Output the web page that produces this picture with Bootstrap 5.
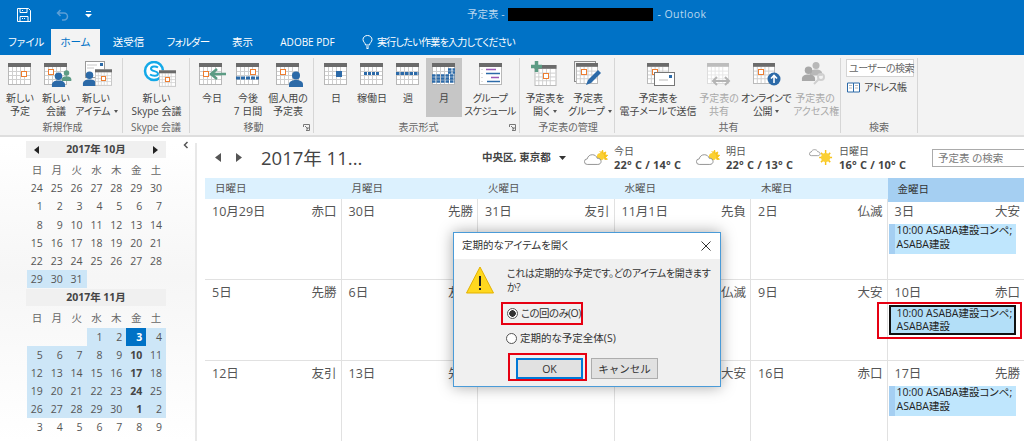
<!DOCTYPE html>
<html lang="ja">
<head>
  <meta charset="UTF-8">
  <meta name="viewport" content="width=device-width, initial-scale=1.0">
  <title>予定表 - Outlook</title>
  <link href="https://cdn.jsdelivr.net/npm/bootstrap@5.3.0/dist/css/bootstrap.min.css" rel="stylesheet">
  <style>
    html, body { height: 441px; overflow: hidden; }
    body {
      position: relative;
      font-family: "Open Sans", "Noto Sans CJK JP", sans-serif;
      font-feature-settings: "palt";
      font-size: 10px;
      color: #555;
      background: #fff;
    }
    .tight { letter-spacing: -.6px; }
    /* title bar and tabs */
    .title-bar { height: 29px; background: #0072c6; color: #b9d7ef; font-size: 10.5px; }
    .quick-bar { width: 467px; }
    .quick-bar svg { display: block; }
    .title-mask { width: 145px; height: 13px; background: #000; margin: 0 5px 0 3px; }
    .title-app { letter-spacing: .4px; }
    .tab-bar { height: 26px; background: #0072c6; color: #fff; font-size: 10.5px; }
    .tab-item { line-height: 26px; text-align: center; }
    .tab-file { width: 51px; padding-left: 8px; text-align: left; }
    .tab-home { width: 49px; background: #f3f3f3; color: #0072c6; }
    .tab-send { width: 57px; }
    .tab-folder { width: 62px; letter-spacing: -.8px; }
    .tab-view { width: 47px; }
    .tab-pdf { width: 83px; font-size: 10px; }
    .tab-tell { margin-left: 13px; gap: 4px; font-size: 10px; letter-spacing: -.7px; }
    /* ribbon */
    .ribbon { height: 82px; background: #f3f3f3; border-bottom: 2px solid #dedede; }
    .rb-group { position: relative; height: 75px; margin-top: 3px; border-right: 1px solid #d6d6d6; flex-shrink: 0; }
    .rb-btns { flex: 1; }
    .rb-label { height: 16px; padding-top: 4px; line-height: 12px; text-align: center; color: #666; }
    .rb-launch { position: absolute; right: 3px; bottom: 2px; display: block; }
    .rb-btn { height: 59px; padding-top: 3px; line-height: 13px; color: #444; text-align: center; flex-shrink: 0; white-space: nowrap; }
    .rb-btn svg { display: block; margin: 0 auto 3px; }
    .rb-on { background: #c6c6c6; }
    .rb-off { color: #a9a9a9; }
    .dd::after { content: ""; display: inline-block; margin-left: 3px; vertical-align: 2px; border: 2px solid transparent; border-top: 3px solid #555; border-bottom: 0; }
    .g1 { width: 123px; padding-left: 3px; } .g2 { width: 67px; } .g3 { width: 124px; padding-left: 4px; }
    .g4 { width: 206px; padding-left: 4px; } .g5 { width: 95px; padding-left: 2px; } .g6 { width: 226px; padding-left: 2px; } .g7 { width: 77px; }
    .w34 { width: 34px; } .w36 { width: 36px; } .w38 { width: 38px; } .w40 { width: 40px; } .w42 { width: 42px; } .w44 { width: 44px; }
    .w46 { width: 46px; } .w54 { width: 54px; } .w56 { width: 56px; } .w67 { width: 67px; } .w82 { width: 82px; }
    .people-find { margin: 1px 3px 0 5px; height: 18px; line-height: 16px; border: 1px solid #d4d4d4; background: #fff; padding-left: 2px; color: #666; white-space: nowrap; letter-spacing: -.5px; }
    .addr-book { margin: 4px 0 0 6px; gap: 3px; color: #444; line-height: 13px; letter-spacing: -.5px; }
    /* left pane */
    .app-body { height: 304px; }
    .side { width: 197px; flex-shrink: 0; margin-top: 6px; padding: 0 0 0 26px; border-right: 2px solid #e8e8e8; position: relative; background: linear-gradient(#fff, #f6f6f6 45%, #fff); }
    .side-hide { position: absolute; top: -2px; left: 183px; display: block; }
    .mini-cal { width: 140px; }
    .mini-head { height: 17px; margin-top: -2px; background: #f0f0f0; font-size: 10.5px; font-weight: 700; color: #444; }
    .mini-oct { margin-top: 0; }
    .mini-nov { margin-top: 3px; }
    .mini-grid { display: grid; grid-template-columns: repeat(7, 1fr); grid-auto-rows: 18.2px; width: 139px; margin: 3px 0 0 1px; font-size: 10.5px; line-height: 18px; }
    .mini-wd { text-align: center; color: #666; }
    .mini-day { text-align: right; padding-right: 4px; }
    .mini-in { background: #cde6f7; }
    .mini-sel { background: #0072c6; color: #fff; font-weight: 700; }
    .mini-bold { font-weight: 700; color: #444; }
    /* calendar */
    .main-pane { flex: 1; min-width: 0; padding-left: 8px; }
    .cal-top { height: 41px; }
    .nav-arrows { width: 56px; padding-left: 10px; gap: 15px; }
    .cal-title { width: 221px; font-size: 18.5px; color: #444; line-height: 24px; }
    .cal-place { width: 102px; font-size: 10.5px; font-weight: 700; color: #444; white-space: nowrap; }
    .wx-item { gap: 6px; line-height: 13px; }
    .wx-temp { font-size: 11px; font-weight: 700; color: #444; letter-spacing: .2px; white-space: nowrap; }
    .wx-1 { width: 112px; } .wx-2 { width: 113px; } .wx-3 { width: 123px; }
    .cal-search { flex: 1; height: 18px; margin-top: 1px; border: 1px solid #ababab; border-right: 0; color: #777; line-height: 16px; padding-left: 5px; font-size: 10.5px; white-space: nowrap; }
    .month-grid { display: grid; grid-template-columns: repeat(6, 1fr); grid-template-rows: 21px 81px 81px 81px; }
    .day-head { background: #dcf1fe; font-size: 10.5px; line-height: 21px; padding-left: 10px; color: #555; }
    .day-head-on { background: #a5cff2; height: 24px; line-height: 22px; position: relative; z-index: 1; color: #333; }
    .day-cell { padding-top: 4px; border-right: 1px solid #e1e1e1; border-bottom: 1px solid #e1e1e1; position: relative; }
    .day-cell:nth-child(6n) { border-right: 0; }
    .day-line { height: 18px; padding: 0 4px 0 7px; font-size: 12.5px; line-height: 18px; white-space: nowrap; }
    .appt { position: relative; width: 127px; height: 30px; margin: 3px 0 0 1px; border-left: 6px solid #a5cff2; padding-left: 2px; background: #bfe6fd; color: #222; font-size: 10.5px; line-height: 13.5px; white-space: nowrap; }
    .appt-sel { border: 2px solid #111; padding-left: 6px; line-height: 12.5px; background: #b3dff8; }
    .appt-sel::after { content: ""; position: absolute; top: -5px; right: -8px; bottom: -6px; left: -14px; border: 2px solid #e60012; }
    /* dialog */
    .dlg { position: absolute; left: 453px; top: 232px; width: 268px; height: 155px; background: #f0f0f0; border: 1px solid #4a9bd8; box-shadow: 0 0 14px rgba(0, 0, 0, .35); z-index: 5; font-size: 10.5px; color: #333; }
    .dlg-title { height: 26px; background: #fff; padding: 0 9px 0 8px; }
    .dlg-msg { padding: 7px 8px 0 12px; gap: 13px; line-height: 14px; height: 42px; font-size: 10px; letter-spacing: -.35px; white-space: nowrap; }
    .dlg-radio { margin: 0; padding: 0; min-height: 0; gap: 3px; line-height: 15px; }
    .dlg-radio .form-check-input { float: none; margin: 0; width: 11px; height: 11px; border: 1px solid #555; background: #fff; flex-shrink: 0; }
    .dlg-radio .form-check-input:checked { background-image: radial-gradient(circle, #333 0 3px, transparent 3.5px); background-color: #fff; border-color: #555; }
    .dlg-radio .form-check-label { font-size: 10.5px; white-space: nowrap; }
    .radio-mark { margin: 1px 0 0 47px; width: 82px; height: 23px; padding-left: 4px; border: 2px solid #e60012; }
    .radio-mark .form-check-label { letter-spacing: -.6px; }
    .radio-plain { margin: 3px 0 0 52px; height: 20px; }
    .dlg-btns { margin: 5px 0 0 54px; gap: 4px; }
    .ok-mark { padding: 3px 2px 1px 6px; border: 2px solid #e60012; height: 28px; }
    .dlg-btn { width: 67px; height: 21px; padding: 0; border-radius: 0; background: #e1e1e1; border: 1px solid #adadad; color: #333; font-size: 10.5px; line-height: 18px; }
    .dlg-ok { border: 2px solid #0078d7; }
    .btn-cancel { margin-top: 5px; }
  </style>
</head>
<body>
  <!-- shared icon parts -->
  <svg width="0" height="0" class="d-block">
    <defs>
      <symbol id="cal" viewBox="0 0 23 22">
        <rect x=".5" y=".5" width="22" height="21" fill="#fff" stroke="#b8b8b8"/>
        <path d="M4.500 4v17M8.500 4v17M12.500 4v17M16.500 4v17M1 8.500h21M1 12.500h21M1 16.500h21" stroke="#cfcfcf" fill="none"/>
        <rect width="23" height="4" fill="#6b6b6b"/>
      </symbol>
      <symbol id="calp" viewBox="0 0 23 22">
        <rect x=".5" y=".5" width="22" height="21" fill="#fff" stroke="#dcdcdc"/>
        <path d="M4.500 4v17M8.500 4v17M12.500 4v17M16.500 4v17M1 8.500h21M1 12.500h21M1 16.500h21" stroke="#e6e6e6" fill="none"/>
        <rect width="23" height="4" fill="#bdbdbd"/>
      </symbol>
      <symbol id="man" viewBox="0 0 16 16">
        <circle cx="8" cy="4.500" r="4"/>
        <path d="M1 16v-2.500c0-3 3-4.500 7-4.500s7 1.500 7 4.500V16z"/>
      </symbol>
      <symbol id="wx" viewBox="0 0 26 18">
        <path d="M17 2l1.500 2 1.700-3 .5 3.400 3-1.400-1 3.300 3 .3-2.300 2.300 2 2-3 .3" fill="#f7c31b" stroke="#f7c31b"/>
        <circle cx="18" cy="8" r="4" fill="#fbd033"/>
        <path d="M3.500 16.500a3 3 0 0 1 0-6c.6-3 3-4.500 5.500-4.500 2.600 0 4.600 1.400 5.300 3.800 2.500-.2 4.200 1.300 4.200 3.400s-1.600 3.300-3.500 3.300z" fill="#fff" stroke="#8c8c8c"/>
      </symbol>
      <symbol id="wxsun" viewBox="0 0 26 18">
        <path d="M18 1v16M11 9h14M13 4l10 10M23 4L13 14" stroke="#f7c31b" stroke-width="1.600"/>
        <circle cx="18" cy="9" r="5" fill="#fbd033"/>
        <path d="M2.500 7a2 2 0 0 1 0-4c.5-1.700 2-2.500 3.500-2.500 1.700 0 3 .9 3.500 2.300 1.500 0 2.500.9 2.500 2.100S11 7 9.500 7z" fill="#fff" stroke="#9a9a9a"/>
      </symbol>
    </defs>
  </svg>

  <div class="title-bar d-flex align-items-center">
    <div class="quick-bar d-flex align-items-center">
      <svg class="ms-3" width="16" height="16" viewBox="0 0 16 16" fill="none" stroke="#fff"><path d="M1.500 1.500h11l2 2v11h-13zM4 1.500v4h7v-4M4 14.500v-5h8v5"/><path d="M6 11.500h4M6 3.500h2" stroke-dasharray="1 1"/></svg>
      <svg class="ms-4" width="13" height="12" viewBox="0 0 13 12" fill="none" stroke="#5c9fd6" stroke-width="1.500"><path d="M4.500 1L1.500 4l3 3M1.500 4H8a3.500 3.500 0 0 1 0 7H6"/></svg>
      <svg class="ms-3" width="7" height="7" viewBox="0 0 7 7" fill="#fff"><path d="M1 0h5v1H1zM0 3h7L3.500 6.500z"/></svg>
    </div>
    <span>予定表 -</span>
    <span class="title-mask"></span>
    <span class="title-app">- Outlook</span>
  </div>

  <div class="tab-bar d-flex">
    <div class="tab-item tab-file">ファイル</div>
    <div class="tab-item tab-home">ホーム</div>
    <div class="tab-item tab-send">送受信</div>
    <div class="tab-item tab-folder">フォルダー</div>
    <div class="tab-item tab-view">表示</div>
    <div class="tab-item tab-pdf">ADOBE PDF</div>
    <div class="tab-item tab-tell d-flex align-items-center">
      <svg width="11" height="14" viewBox="0 0 11 14" fill="none" stroke="#fff"><path d="M3.500 10C3.500 8 1 7 1 4.500a4.500 4 0 0 1 9 0C10 7 7.500 8 7.500 10zM4 12h3M4.500 13.500h2"/></svg>
      <span>実行したい作業を入力してください</span>
    </div>
  </div>

  <div class="ribbon d-flex">
    <div class="rb-group g1 d-flex flex-column">
      <div class="rb-btns d-flex">
        <div class="rb-btn w34">
          <svg width="34" height="28"><use href="#cal" x="5" y="2" width="23" height="22"/><rect x="18.500" y="10.500" width="5" height="5" fill="#fff" stroke="#ed7d31"/></svg>
          新しい<br>予定
        </div>
        <div class="rb-btn w38">
          <svg width="38" height="28"><use href="#cal" x="7" y="2" width="23" height="22"/><rect x="11.500" y="8.500" width="5" height="5" fill="#fff" stroke="#ed7d31"/><use href="#man" x="24" y="8" width="11" height="13" fill="#5c9b84"/><use href="#man" x="14" y="11" width="15" height="15" fill="#2c6aa8"/></svg>
          新しい<br>会議
        </div>
        <div class="rb-btn w42">
          <svg width="42" height="28"><rect x="10.500" y=".5" width="19" height="16" fill="#fff" stroke="#9a9a9a"/><path d="M12 4h10M12 7h7" stroke="#c8c8c8"/><rect x="25" y="2" width="3" height="3" fill="#2c6aa8"/><use href="#man" x="7" y="10" width="15" height="15" fill="#2c6aa8"/><use href="#cal" x="20" y="8" width="17" height="17"/><rect x="26.500" y="15.500" width="4" height="4" fill="#fff" stroke="#ed7d31"/></svg>
          新しい<br><span class="dd">アイテム</span>
        </div>
      </div>
      <div class="rb-label">新規作成</div>
    </div>
    <div class="rb-group g2 d-flex flex-column">
      <div class="rb-btns d-flex">
        <div class="rb-btn w67">
          <svg width="46" height="28"><circle cx="20" cy="10" r="9" fill="#fff" stroke="#14a9e8" stroke-width="2.500"/><path d="M24 6.500c-2-1.500-7-1.500-7 1.200 0 3 7 1.800 7 5 0 2.700-5.500 2.500-8 .8" fill="none" stroke="#14a9e8" stroke-width="2"/><use href="#cal" x="25" y="9" width="17" height="17"/><rect x="31.500" y="16.500" width="4" height="4" fill="#fff" stroke="#ed7d31"/></svg>
          新しい<br>Skype 会議
        </div>
      </div>
      <div class="rb-label">Skype 会議</div>
    </div>
    <div class="rb-group g3 d-flex flex-column">
      <div class="rb-btns d-flex">
        <div class="rb-btn w36">
          <svg width="36" height="28"><use href="#cal" x="5" y="2" width="23" height="22"/><rect x="9.500" y="10.500" width="5" height="5" fill="#fff" stroke="#ed7d31"/><path d="M18 13h14M23 8l-6 5 6 5" fill="none" stroke="#5c9b84" stroke-width="2.500"/></svg>
          今日
        </div>
        <div class="rb-btn w36">
          <svg width="36" height="28"><use href="#cal" x="6" y="2" width="23" height="22"/><rect x="20.500" y="8.500" width="5" height="5" fill="#fff" stroke="#ed7d31"/><path d="M6 17h23" stroke="#2c6aa8" stroke-width="3" stroke-dasharray="4 1"/></svg>
          今後<br>7 日間
        </div>
        <div class="rb-btn w44">
          <svg width="44" height="28"><use href="#cal" x="10" y="2" width="23" height="22"/><rect x="14.500" y="8.500" width="5" height="5" fill="#fff" stroke="#ed7d31"/><use href="#man" x="22" y="10" width="16" height="16" fill="#2c6aa8"/></svg>
          個人用の<br>予定表
        </div>
      </div>
      <div class="rb-label">移動</div>
      <svg class="rb-launch" width="7" height="7" fill="none" stroke="#777"><path d="M.5 3V.5h6v6H3M2 2l3 3M5 3v2H3"/></svg>
    </div>
    <div class="rb-group g4 d-flex flex-column">
      <div class="rb-btns d-flex">
        <div class="rb-btn w36">
          <svg width="36" height="28"><use href="#cal" x="6" y="2" width="23" height="22"/><rect x="18" y="10" width="6" height="6" fill="#2c6aa8"/></svg>
          日
        </div>
        <div class="rb-btn w36">
          <svg width="36" height="28"><use href="#cal" x="6" y="2" width="23" height="22"/><path d="M10 12.500h15" stroke="#2c6aa8" stroke-width="3" stroke-dasharray="3 1"/></svg>
          稼働日
        </div>
        <div class="rb-btn w36">
          <svg width="36" height="28"><use href="#cal" x="6" y="2" width="23" height="22"/><path d="M6 12.500h23" stroke="#2c6aa8" stroke-width="3" stroke-dasharray="3.500 1"/></svg>
          週
        </div>
        <div class="rb-btn w36 rb-on">
          <svg width="36" height="28"><use href="#cal" x="6" y="2" width="23" height="22"/><path d="M22 8.500h7M22 11.500h7M6 14.500h23M6 17.500h23M6 20.500h23" stroke="#2c6aa8" stroke-width="2.400" stroke-dasharray="3.500 1"/></svg>
          月
        </div>
        <div class="rb-btn w56 tight">
          <svg width="56" height="28"><rect x="17.500" y="2.500" width="22" height="21" fill="#fff" stroke="#b8b8b8"/><rect x="17" y="2" width="23" height="4" fill="#6b6b6b"/><path d="M24 8.500h10" stroke="#9b59b6" stroke-width="1.500"/><path d="M24 12.500h14" stroke="#2c6aa8" stroke-width="1.500"/><path d="M29 16.500h8" stroke="#9b59b6" stroke-width="1.500"/><path d="M25 20.500h13" stroke="#2c6aa8" stroke-width="1.500"/><path d="M20 8v14" stroke="#bbb" stroke-dasharray="1 3"/></svg>
          グループ<br>スケジュール
        </div>
      </div>
      <div class="rb-label">表示形式</div>
      <svg class="rb-launch" width="7" height="7" fill="none" stroke="#777"><path d="M.5 3V.5h6v6H3M2 2l3 3M5 3v2H3"/></svg>
    </div>
    <div class="rb-group g5 d-flex flex-column">
      <div class="rb-btns d-flex">
        <div class="rb-btn w46">
          <svg width="46" height="28"><use href="#cal" x="12" y="4" width="23" height="21"/><rect x="21.500" y="12.500" width="5" height="5" fill="#fff" stroke="#ed7d31"/><path d="M14.500 0v11M9 5.500h11" stroke="#5c9b84" stroke-width="3.500"/></svg>
          予定表を<br><span class="dd">開く</span>
        </div>
        <div class="rb-btn w40">
          <svg width="40" height="28"><rect x="6.500" y=".5" width="21" height="20" fill="#f3f3f3" stroke="#8c8c8c"/><use href="#cal" x="8" y="2" width="22" height="21"/><rect x="13.500" y="8.500" width="5" height="5" fill="#fff" stroke="#ed7d31"/><path d="M18 24l2-5 10-10 3 3-10 10z" fill="#2c6aa8"/></svg>
          予定表<br><span class="dd">グループ</span>
        </div>
      </div>
      <div class="rb-label">予定表の管理</div>
    </div>
    <div class="rb-group g6 d-flex flex-column">
      <div class="rb-btns d-flex">
        <div class="rb-btn w82">
          <svg width="82" height="28"><use href="#cal" x="30" y="2" width="22" height="21"/><rect x="35.500" y="8.500" width="5" height="5" fill="#fff" stroke="#ed7d31"/><rect x="37.500" y="11.500" width="20" height="13" fill="#fff" stroke="#777"/><path d="M42 19h9" stroke="#bbb"/><rect x="52" y="14" width="3" height="3" fill="#2c6aa8"/></svg>
          予定表を<br>電子メールで送信
        </div>
        <div class="rb-btn w40 rb-off">
          <svg width="40" height="28"><use href="#calp" x="8" y="2" width="22" height="21"/><path d="M14 20h16M18 16l-4 4 4 4M26 16l4 4-4 4" fill="none" stroke="#b5b5b5" stroke-width="2"/></svg>
          予定表の<br>共有
        </div>
        <div class="rb-btn w54 tight">
          <svg width="54" height="28"><use href="#cal" x="14" y="2" width="22" height="21"/><rect x="19.500" y="8.500" width="5" height="5" fill="#fff" stroke="#ed7d31"/><circle cx="35" cy="18" r="6.500" fill="#2c6aa8"/><path d="M35 22v-7M32 17.500l3-3 3 3" fill="none" stroke="#fff" stroke-width="1.600"/></svg>
          オンラインで<br><span class="dd">公開</span>
        </div>
        <div class="rb-btn w44 rb-off">
          <svg width="44" height="28"><use href="#man" x="16" y="0" width="14" height="15" fill="#b8b8b8"/><use href="#man" x="8" y="5" width="15" height="15" fill="#a8a8a8"/><circle cx="28" cy="16" r="3" fill="none" stroke="#d0d0d0" stroke-width="2"/><path d="M26 18l-5 5" stroke="#d0d0d0" stroke-width="2"/></svg>
          予定表の<br>アクセス権
        </div>
      </div>
      <div class="rb-label">共有</div>
    </div>
    <div class="rb-group g7 d-flex flex-column">
      <div class="rb-btns">
        <div class="people-find">ユーザーの検索</div>
        <div class="addr-book d-flex align-items-center">
          <svg width="14" height="11" viewBox="0 0 14 11" fill="#fff" stroke="#2c6aa8"><path d="M.5 1h6v9h-6zM6.500 1h6v9h-6z"/><path d="M2 3.500h3M2 6h3M8 3.500h3M8 6h3" stroke="#bbb"/></svg>
          <span>アドレス帳</span>
        </div>
      </div>
      <div class="rb-label">検索</div>
    </div>
  </div>

  <div class="app-body d-flex">
    <aside class="side">
      <svg class="side-hide" width="6" height="8" fill="none" stroke="#555" stroke-width="1.500"><path d="M4.500 1L1.500 4l3 3"/></svg>
      <div class="mini-cal mini-oct">
        <div class="mini-head d-flex align-items-center justify-content-between px-2">
          <svg width="5" height="8" fill="#222"><path d="M5 0v8L0 4z"/></svg>
          <span>2017年 10月</span>
          <svg width="5" height="8" fill="#222"><path d="M0 0v8l5-4z"/></svg>
        </div>
        <div class="mini-grid" id="miniOct"></div>
      </div>
      <div class="mini-cal mini-nov">
        <div class="mini-head d-flex align-items-center justify-content-center"><span>2017年 11月</span></div>
        <div class="mini-grid" id="miniNov"></div>
      </div>
    </aside>

    <main class="main-pane">
      <div class="cal-top d-flex align-items-center">
        <div class="nav-arrows d-flex">
          <svg width="6" height="9" fill="#555"><path d="M6 0v9L0 4.500z"/></svg>
          <svg width="6" height="9" fill="#555"><path d="M0 0v9l6-4.500z"/></svg>
        </div>
        <div class="cal-title">2017年 11...</div>
        <div class="cal-place d-flex align-items-center">
          <span>中央区, 東京都</span>
          <svg class="ms-2" width="7" height="4" fill="#333"><path d="M0 0h7L3.500 4z"/></svg>
        </div>
        <div class="wx-item wx-1 d-flex align-items-center">
          <svg width="24" height="17"><use href="#wx"/></svg>
          <div>今日<div class="wx-temp">22° C / 14° C</div></div>
        </div>
        <div class="wx-item wx-2 d-flex align-items-center">
          <svg width="24" height="17"><use href="#wx"/></svg>
          <div>明日<div class="wx-temp">22° C / 13° C</div></div>
        </div>
        <div class="wx-item wx-3 d-flex align-items-center">
          <svg width="24" height="17"><use href="#wxsun"/></svg>
          <div>日曜日<div class="wx-temp">16° C / 10° C</div></div>
        </div>
        <div class="cal-search">予定表 の検索</div>
      </div>
      <div class="month-grid" id="monthGrid"></div>
    </main>
  </div>

  <div class="dlg">
    <div class="dlg-title d-flex align-items-center justify-content-between">
      <span>定期的なアイテムを開く</span>
      <svg width="10" height="10" fill="none" stroke="#333"><path d="M.5.500l9 9M9.500.500l-9 9"/></svg>
    </div>
    <div class="dlg-msg d-flex">
      <svg class="flex-shrink-0" width="28" height="28" viewBox="0 0 28 28"><path d="M14 1l13.500 26H.5z" fill="#ffd81f" stroke="#e2b100"/><rect x="13" y="10" width="2" height="10" fill="#222"/><rect x="13" y="22" width="2" height="2" fill="#222"/></svg>
      <div>これは定期的な予定です。どのアイテムを開きます<br>か?</div>
    </div>
    <div class="form-check dlg-radio radio-mark d-flex align-items-center">
      <input class="form-check-input" type="radio" name="openItem" id="openOne" checked>
      <label class="form-check-label" for="openOne">この回のみ(O)</label>
    </div>
    <div class="form-check dlg-radio radio-plain d-flex align-items-center">
      <input class="form-check-input" type="radio" name="openItem" id="openAll">
      <label class="form-check-label" for="openAll">定期的な予定全体(S)</label>
    </div>
    <div class="dlg-btns d-flex">
      <div class="ok-mark"><button type="button" class="btn dlg-btn dlg-ok d-block">OK</button></div>
      <button type="button" class="btn dlg-btn btn-cancel">キャンセル</button>
    </div>
  </div>

  <script src="https://cdn.jsdelivr.net/npm/bootstrap@5.3.0/dist/js/bootstrap.bundle.min.js"></script>
  <script>
    const weekdays = ['日', '月', '火', '水', '木', '金', '土'];

    function fillMini(id, days) {
      let html = weekdays.map(d => `<div class="mini-wd">${d}</div>`).join('');
      days.forEach(day => {
        const cls = day[1] ? ' ' + day[1] : '';
        html += `<div class="mini-day${cls}">${day[0]}</div>`;
      });
      document.getElementById(id).innerHTML = html;
    }

    const oct = [];
    [24, 25, 26, 27, 28, 29, 30].forEach(d => oct.push([d]));
    for (let d = 1; d <= 28; d++) oct.push([d]);
    [29, 30, 31].forEach(d => oct.push([d, 'mini-in']));
    fillMini('miniOct', oct);

    const nov = [['', ''], ['', ''], ['', '']];
    for (let d = 1; d <= 30; d++) {
      let cls = 'mini-in';
      if (d === 3) cls = 'mini-sel';
      if (d === 10 || d === 17 || d === 24) cls = 'mini-in mini-bold';
      nov.push([d, cls]);
    }
    nov.push([1, 'mini-in mini-bold'], [2, 'mini-in']);
    for (let d = 3; d <= 9; d++) nov.push([d]);
    fillMini('miniNov', nov);

    // cells whose text sits fully behind the dialog are left blank
    const appt = '10:00 ASABA建設コンペ;<br>ASABA建設';
    const heads = ['日曜日', '月曜日', '火曜日', '水曜日', '木曜日', '金曜日'];
    const cells = [
      ['10月29日', '赤口'], ['30日', '先勝'], ['31日', '友引'], ['11月1日', '先負'], ['2日', '仏滅'], ['3日', '大安', 'appt'],
      ['5日', '先勝'], ['6日', '友引'], ['', ''], ['', '仏滅'], ['9日', '大安'], ['10日', '赤口', 'appt appt-sel'],
      ['12日', '友引'], ['13日', '先負'], ['', ''], ['', '大安'], ['16日', '赤口'], ['17日', '先勝', 'appt']
    ];
    let grid = heads.map((h, i) => `<div class="day-head${i === 5 ? ' day-head-on' : ''}">${h}</div>`).join('');
    cells.forEach(c => {
      const item = c[2] ? `<div class="${c[2]}">${appt}</div>` : '';
      grid += `<div class="day-cell"><div class="day-line d-flex justify-content-between"><span>${c[0]}</span><span>${c[1]}</span></div>${item}</div>`;
    });
    document.getElementById('monthGrid').innerHTML = grid;
  </script>
</body>
</html>
